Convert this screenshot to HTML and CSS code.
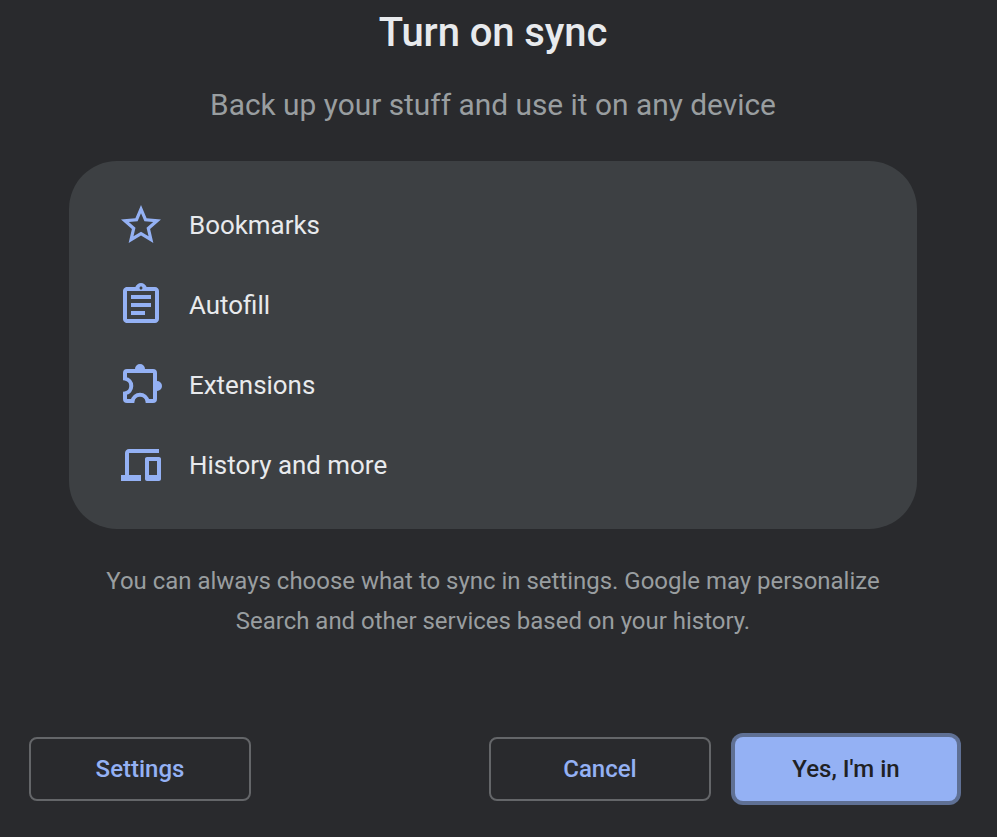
FILE: index.html
```html
<!DOCTYPE html>
<html lang="en">
<head>
<meta charset="utf-8">
<title>Turn on sync</title>
<link rel="stylesheet" href="styles.css">
</head>
<body>
<main class="dialog">
  <h1 class="title">Turn on sync</h1>
  <p class="subtitle">Back up your stuff and use it on any device</p>
  <ul class="benefits">
    <li class="benefit">
      <svg class="icon" viewBox="0 0 24 24"><path d="M22 9.24l-7.19-.62L12 2 9.19 8.63 2 9.24l5.46 4.73L5.82 21 12 17.27 18.18 21l-1.63-7.03L22 9.24zM12 15.4l-3.76 2.27 1-4.28-3.32-2.88 4.38-.38L12 6.1l1.71 4.04 4.38.38-3.32 2.88 1 4.28L12 15.4z"/></svg>
      <span>Bookmarks</span>
    </li>
    <li class="benefit">
      <svg class="icon" viewBox="0 0 24 24"><path d="M7 15h7v2H7zm0-4h10v2H7zm0-4h10v2H7zm12-4h-4.180C14.400 1.840 13.300 1 12 1c-1.300 0-2.400.84-2.820 2H5c-.14 0-.27.01-.4.04-.39.08-.74.28-1.010.55-.18.18-.33.4-.43.64-.1.23-.16.49-.16.77v14c0 .27.06.54.16.78s.25.45.43.64c.27.27.62.47 1.010.55.13.02.26.03.4.03h14c1.100 0 2-.9 2-2V5c0-1.100-.9-2-2-2zm-7-.25c.41 0 .75.34.75.75s-.34.75-.75.75-.75-.34-.75-.75.34-.75.75-.75zM19 19H5V5h14v14z"/></svg>
      <span>Autofill</span>
    </li>
    <li class="benefit">
      <svg class="icon" viewBox="0 0 24 24"><path d="M9 5V4a2.500 2.500 0 0 1 5 0v1zM19 10h1a2.500 2.500 0 0 1 0 5h-1z"/><path class="outline" d="M5 5H18a1 1 0 0 1 1 1V19a1 1 0 0 1-1 1H15.200a3.750 3.750 0 0 0-7.400 0H5a1 1 0 0 1-1-1V16.200a3.750 3.750 0 0 0 0-7.400V6a1 1 0 0 1 1-1z"/></svg>
      <span>Extensions</span>
    </li>
    <li class="benefit">
      <svg class="icon" viewBox="0 0 24 24"><path d="M6 6h15V4H6c-1.100 0-2 .9-2 2v11H2v3h10v-3H6zM21 8h-6c-.55 0-1 .45-1 1v10c0 .55.45 1 1 1h6c.55 0 1-.45 1-1V9c0-.55-.45-1-1-1zm-1 9h-4v-7h4z"/></svg>
      <span>History and more</span>
    </li>
  </ul>
  <p class="disclaimer">You can always choose what to sync in settings. Google may personalize Search and other services based on your history.</p>
  <div class="actions">
    <button class="button settings">Settings</button>
    <button class="button">Cancel</button>
    <button class="button primary">Yes, I'm in</button>
  </div>
</main>
</body>
</html>
```
FILE: styles.css
```css
* { box-sizing: border-box; }
body {
  margin: 0;
  background: #292a2d;
  color: #e8eaed;
  font-family: Roboto, sans-serif;
}
.dialog {
  width: 986px;
  height: 837px;
  padding-top: 9px;
  overflow: hidden;
}
.title {
  margin: 0;
  font-size: 40px;
  line-height: 48px;
  font-weight: 500;
  letter-spacing: -0.1px;
  text-align: center;
}
.subtitle {
  margin: 24px 0 0;
  font-size: 29.86px;
  line-height: 48px;
  text-align: center;
  color: #999ea0;
}
.benefits {
  display: flex;
  flex-direction: column;
  gap: 32px;
  width: 848px;
  height: 368px;
  margin: 32px auto 0;
  padding: 40px 48px;
  list-style: none;
  border-radius: 48px;
  background: #3d4043;
}
.benefit {
  display: flex;
  align-items: center;
  gap: 24px;
  height: 48px;
  font-size: 25.93px;
}
.icon {
  width: 48px;
  height: 48px;
  fill: #94b1f4;
}
.icon .outline {
  fill: none;
  stroke: #94b1f4;
  stroke-width: 2;
}
.disclaimer {
  width: 800px;
  margin: 32px auto 0;
  font-size: 23.96px;
  line-height: 40px;
  text-align: center;
  color: #999ea0;
}
.actions {
  display: flex;
  gap: 24px;
  margin: 96px 29px 0 29px;
}
.button {
  width: 222px;
  height: 64px;
  padding: 0;
  border: 2px solid #646669;
  border-radius: 8px;
  background: none;
  color: #94b1f4;
  font: 500 24px Roboto, sans-serif;
}
.settings { margin-right: auto; }
.primary {
  border: 0;
  background: #94b1f4;
  color: #202124;
  box-shadow: 0 0 0 4px #5f7094;
}
```
